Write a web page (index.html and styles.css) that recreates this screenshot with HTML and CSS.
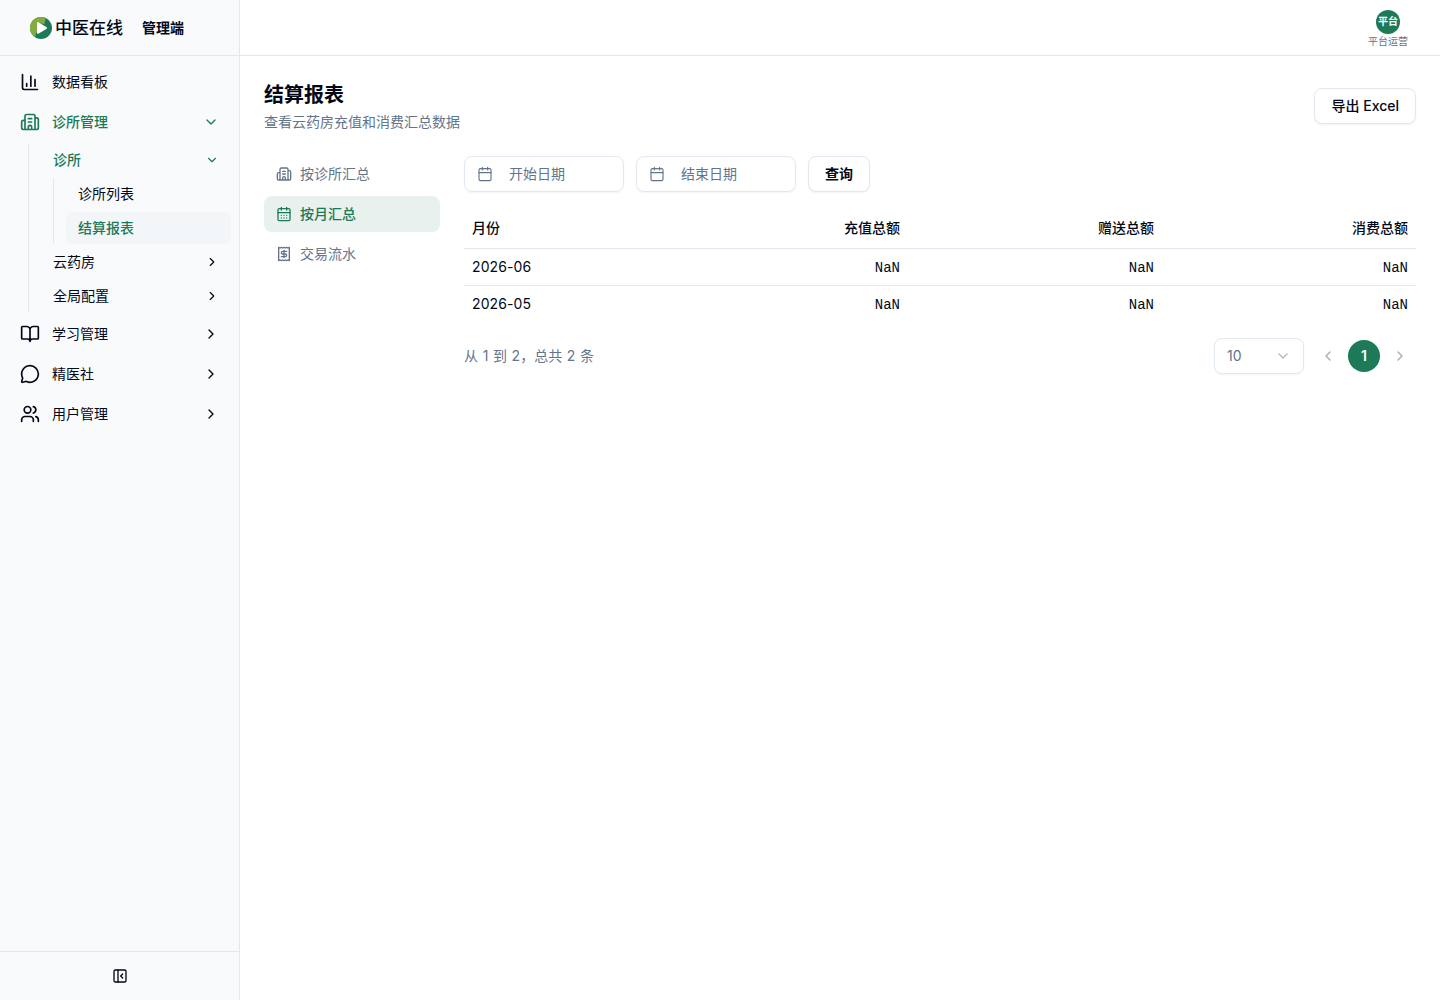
FILE: index.html
```html
<!DOCTYPE html>
<html lang="zh-CN">
<head>
    <meta charset="UTF-8">
    <meta name="viewport" content="width=device-width, initial-scale=1.0">
    <title>结算报表</title>
    <link rel="stylesheet" href="styles.css">
</head>
<body>
    <svg class="sprite">
        <symbol id="down" viewBox="0 0 24 24"><path d="m6 9 6 6 6-6"/></symbol>
        <symbol id="right" viewBox="0 0 24 24"><path d="m9 18 6-6-6-6"/></symbol>
        <symbol id="left" viewBox="0 0 24 24"><path d="m15 18-6-6 6-6"/></symbol>
        <symbol id="chart" viewBox="0 0 24 24"><path d="M3 3v16a2 2 0 0 0 2 2h16M18 17V9M13 17V5M8 17v-3"/></symbol>
        <symbol id="building" viewBox="0 0 24 24"><path d="M10 12h4M10 8h4M14 21v-3a2 2 0 0 0-4 0v3M6 10H4a2 2 0 0 0-2 2v7a2 2 0 0 0 2 2h16a2 2 0 0 0 2-2V9a2 2 0 0 0-2-2h-2M6 21V5a2 2 0 0 1 2-2h8a2 2 0 0 1 2 2v16"/></symbol>
        <symbol id="book" viewBox="0 0 24 24"><path d="M12 7v14M3 18a1 1 0 0 1-1-1V4a1 1 0 0 1 1-1h5a4 4 0 0 1 4 4 4 4 0 0 1 4-4h5a1 1 0 0 1 1 1v13a1 1 0 0 1-1 1h-6a3 3 0 0 0-3 3 3 3 0 0 0-3-3z"/></symbol>
        <symbol id="message" viewBox="0 0 24 24"><path d="M2.992 16.342a2 2 0 0 1 .094 1.167l-1.065 3.29a1 1 0 0 0 1.236 1.168l3.413-.998a2 2 0 0 1 1.099.092 10 10 0 1 0-4.777-4.719"/></symbol>
        <symbol id="users" viewBox="0 0 24 24"><path d="M16 21v-2a4 4 0 0 0-4-4H6a4 4 0 0 0-4 4v2M16 3.128a4 4 0 0 1 0 7.744M22 21v-2a4 4 0 0 0-3-3.87"/><circle cx="9" cy="7" r="4"/></symbol>
        <symbol id="panel" viewBox="0 0 24 24"><rect width="18" height="18" x="3" y="3" rx="2"/><path d="M9 3v18M16 15l-3-3 3-3"/></symbol>
        <symbol id="calendar" viewBox="0 0 24 24"><path d="M8 2v4M16 2v4M3 10h18"/><rect width="18" height="18" x="3" y="4" rx="2"/></symbol>
        <symbol id="days" viewBox="0 0 24 24"><path d="M8 2v4M16 2v4M3 10h18M8 14h.01M12 14h.01M16 14h.01M8 18h.01M12 18h.01M16 18h.01"/><rect width="18" height="18" x="3" y="4" rx="2"/></symbol>
        <symbol id="receipt" viewBox="0 0 24 24"><path d="M4 2v20l2-1 2 1 2-1 2 1 2-1 2 1 2-1 2 1V2l-2 1-2-1-2 1-2-1-2 1-2-1-2 1ZM16 8h-6a2 2 0 1 0 0 4h4a2 2 0 1 1 0 4H8M12 17.5v-11"/></symbol>
    </svg>

    <div class="layout">
        <aside class="sidebar">
            <div class="brand">
                <svg class="logo" viewBox="0 0 22 22">
                    <circle cx="11" cy="11" r="11" fill="#1d7a58"/>
                    <path d="M5.500 20.530A11 11 0 0 1 15.500 .960L14.500 7L7 6V15Q5 17 5.500 20.530Z" fill="#84ab43"/>
                    <path d="M7 6.400Q7 4.500 8.700 5.400L16.400 9.900Q17.800 11 16.400 12.100L8.700 16.600Q7 17.500 7 15.600Z" fill="#fff"/>
                </svg>
                <span class="brand-name">中医在线</span>
                <span class="brand-sub">管理端</span>
            </div>
            <nav class="menu">
                <a class="item"><svg class="icon"><use href="#chart"/></svg><span>数据看板</span></a>
                <a class="item active"><svg class="icon"><use href="#building"/></svg><span>诊所管理</span><svg class="arrow"><use href="#down"/></svg></a>
                <div class="submenu">
                    <a class="subitem active"><span>诊所</span><svg class="arrow"><use href="#down"/></svg></a>
                    <div class="leafs">
                        <a class="leaf">诊所列表</a>
                        <a class="leaf current">结算报表</a>
                    </div>
                    <a class="subitem"><span>云药房</span><svg class="arrow"><use href="#right"/></svg></a>
                    <a class="subitem"><span>全局配置</span><svg class="arrow"><use href="#right"/></svg></a>
                </div>
                <a class="item"><svg class="icon"><use href="#book"/></svg><span>学习管理</span><svg class="arrow"><use href="#right"/></svg></a>
                <a class="item"><svg class="icon"><use href="#message"/></svg><span>精医社</span><svg class="arrow"><use href="#right"/></svg></a>
                <a class="item"><svg class="icon"><use href="#users"/></svg><span>用户管理</span><svg class="arrow"><use href="#right"/></svg></a>
            </nav>
            <div class="collapse"><svg><use href="#panel"/></svg></div>
        </aside>

        <div class="content">
            <header class="topbar">
                <div class="user">
                    <div class="avatar">平台</div>
                    <div class="user-name">平台运营</div>
                </div>
            </header>
            <main class="page">
                <div class="page-head">
                    <div>
                        <h1>结算报表</h1>
                        <p>查看云药房充值和消费汇总数据</p>
                    </div>
                    <button class="button">导出 Excel</button>
                </div>
                <div class="report">
                    <div class="tabs">
                        <a class="tab"><svg><use href="#building"/></svg>按诊所汇总</a>
                        <a class="tab selected"><svg><use href="#days"/></svg>按月汇总</a>
                        <a class="tab"><svg><use href="#receipt"/></svg>交易流水</a>
                    </div>
                    <div class="result">
                        <div class="filters">
                            <div class="date"><svg><use href="#calendar"/></svg>开始日期</div>
                            <div class="date"><svg><use href="#calendar"/></svg>结束日期</div>
                            <button class="button">查询</button>
                        </div>
                        <table>
                            <thead>
                                <tr><th>月份</th><th>充值总额</th><th>赠送总额</th><th>消费总额</th></tr>
                            </thead>
                            <tbody>
                                <tr><td>2026-06</td><td>NaN</td><td>NaN</td><td>NaN</td></tr>
                                <tr><td>2026-05</td><td>NaN</td><td>NaN</td><td>NaN</td></tr>
                            </tbody>
                        </table>
                        <div class="footer">
                            <span class="count">从 1 到 2，总共 2 条</span>
                            <div class="size"><span>10</span><svg><use href="#down"/></svg></div>
                            <div class="pager">
                                <span class="page-btn"><svg><use href="#left"/></svg></span>
                                <span class="page-btn on">1</span>
                                <span class="page-btn"><svg><use href="#right"/></svg></span>
                            </div>
                        </div>
                    </div>
                </div>
            </main>
        </div>
    </div>
</body>
</html>
```
FILE: styles.css
```css
* {
    box-sizing: border-box;
}
body {
    margin: 0;
    font-family: Inter, "Noto Sans CJK SC", sans-serif;
    font-size: 14px;
    line-height: 20px;
    color: #020817;
    background-color: #fff;
}
svg {
    display: block;
    flex-shrink: 0;
    width: 16px;
    height: 16px;
    fill: none;
    stroke: currentColor;
    stroke-width: 2;
    stroke-linecap: round;
    stroke-linejoin: round;
}
.sprite {
    display: none;
}
.layout {
    display: flex;
    height: 100vh;
}

/* sidebar */
.sidebar {
    display: flex;
    flex-direction: column;
    width: 240px;
    background-color: #f8fafc;
    border-right: 1px solid #e2e8f0;
}
.brand {
    display: flex;
    align-items: center;
    height: 56px;
    padding-left: 30px;
    border-bottom: 1px solid #e2e8f0;
}
.logo {
    width: 22px;
    height: 22px;
    stroke: none;
}
.brand-name {
    margin-left: 3px;
    font-size: 17px;
    font-weight: 500;
}
.brand-sub {
    margin-left: 19px;
    font-weight: 600;
}
.menu {
    display: flex;
    flex-direction: column;
    gap: 4px;
    flex: 1;
    padding: 8px;
}
.item {
    display: flex;
    align-items: center;
    gap: 12px;
    height: 36px;
    padding: 0 12px;
}
.icon {
    width: 20px;
    height: 20px;
}
.arrow {
    margin-left: auto;
}
.active {
    color: #1d7a58;
    font-weight: 500;
}
.submenu {
    display: flex;
    flex-direction: column;
    gap: 2px;
    margin-left: 20px;
    padding-left: 12px;
    border-left: 1px solid #e2e8f0;
}
.subitem {
    display: flex;
    align-items: center;
    height: 32px;
    padding: 0 12px;
}
.subitem .arrow {
    width: 14px;
    height: 14px;
}
.leafs {
    display: flex;
    flex-direction: column;
    gap: 2px;
    margin-left: 12px;
    padding-left: 12px;
    border-left: 1px solid #e2e8f0;
}
.leaf {
    height: 32px;
    padding: 6px 12px;
    border-radius: 6px;
}
.current {
    color: #1d7a58;
    font-weight: 500;
    background-color: #f3f6f8;
}
.collapse {
    display: flex;
    align-items: center;
    justify-content: center;
    height: 49px;
    border-top: 1px solid #e2e8f0;
}

/* top bar */
.content {
    flex: 1;
}
.topbar {
    display: flex;
    align-items: center;
    justify-content: flex-end;
    height: 56px;
    padding-right: 32px;
    border-bottom: 1px solid #e2e8f0;
}
.user {
    display: flex;
    flex-direction: column;
    align-items: center;
    gap: 2px;
    padding-top: 2px;
}
.avatar {
    width: 24px;
    height: 24px;
    border-radius: 50%;
    background-color: #1d7a58;
    color: #fff;
    font-size: 10px;
    font-weight: 600;
    line-height: 23px;
    text-align: center;
}
.user-name {
    font-size: 10px;
    line-height: 11px;
    color: #64748b;
}

/* page */
.page {
    padding: 24px;
}
.page-head {
    display: flex;
    align-items: center;
    justify-content: space-between;
    height: 52px;
}
h1 {
    margin: 0;
    padding-top: 5px;
    font-size: 20px;
    font-weight: 600;
    line-height: 28px;
}
p {
    margin: 0 0 2px;
    line-height: 25px;
    color: #64748b;
}
.button {
    height: 36px;
    padding: 0 16px 2px;
    border: 1px solid #e2e8f0;
    border-radius: 8px;
    background-color: #fff;
    box-shadow: 0 1px 2px rgba(0, 0, 0, 0.05);
    font-family: inherit;
    font-size: 14px;
    font-weight: 500;
    color: inherit;
}
.filters .button {
    font-weight: 600;
}
.report {
    display: flex;
    gap: 24px;
    margin-top: 24px;
}
.tabs {
    display: flex;
    flex-direction: column;
    gap: 4px;
    width: 176px;
}
.tab {
    display: flex;
    align-items: center;
    gap: 8px;
    height: 36px;
    padding: 0 12px;
    border-radius: 8px;
    color: #64748b;
}
.selected {
    color: #1d7a58;
    font-weight: 500;
    background-color: #e8f1ee;
}
.result {
    flex: 1;
}
.filters {
    display: flex;
    gap: 12px;
}
.date {
    display: flex;
    align-items: center;
    gap: 16px;
    width: 160px;
    height: 36px;
    padding: 0 12px;
    border: 1px solid #e2e8f0;
    border-radius: 8px;
    box-shadow: 0 1px 2px rgba(0, 0, 0, 0.05);
    color: #64748b;
}
.date svg {
    stroke-width: 1.7;
}
table {
    width: 100%;
    margin-top: 16px;
    table-layout: fixed;
    border-collapse: collapse;
}
th {
    height: 40px;
    padding: 0 8px;
    font-weight: 500;
    text-align: right;
}
th:first-child {
    width: 190px;
}
td {
    height: 37px;
    padding: 2px 8px 0;
    border-top: 1px solid #e2e8f0;
    font-family: "Liberation Mono", monospace;
    text-align: right;
}
th:first-child, td:first-child {
    text-align: left;
}
td:first-child {
    padding-top: 0;
    font-family: inherit;
    letter-spacing: 0.1px;
}
.footer {
    display: flex;
    align-items: center;
    margin-top: 16px;
    color: #64748b;
}
.count {
    margin-right: auto;
    word-spacing: 0.7px;
}
.size {
    display: flex;
    align-items: center;
    justify-content: space-between;
    width: 90px;
    height: 36px;
    padding: 0 12px;
    border: 1px solid #e2e8f0;
    border-radius: 8px;
    box-shadow: 0 1px 2px rgba(0, 0, 0, 0.05);
}
.size svg {
    opacity: 0.5;
}
.pager {
    display: flex;
    gap: 4px;
    margin-left: 8px;
}
.page-btn {
    display: flex;
    align-items: center;
    justify-content: center;
    width: 32px;
    height: 32px;
    border-radius: 50%;
    color: #a1aab8;
}
.on {
    color: #fff;
    font-weight: 600;
    background-color: #1d7a58;
}
```
